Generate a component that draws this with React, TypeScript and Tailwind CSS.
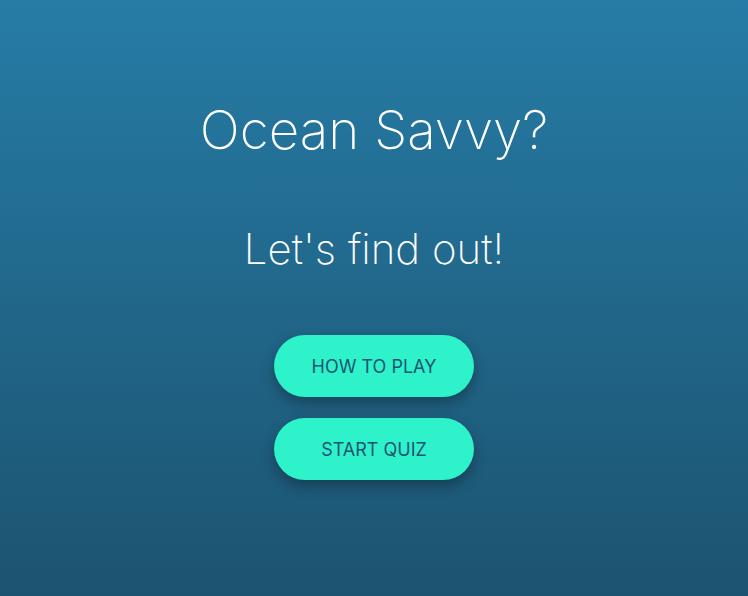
import React from 'react';

export default function App() {
    return (
        <div className="min-h-[596px] w-full bg-gradient-to-b from-[#267ca6] to-[#1c5370] flex flex-col items-center font-['Inter',sans-serif] text-white">
            <h1 className="mt-[98px] text-[53px] leading-[64px] font-extralight">Ocean Savvy?</h1>
            <p className="mt-[61px] text-[42px] leading-[52px] font-extralight">Let's find out!</p>
            <div className="mt-[60px] flex flex-col gap-[21px]">
                <button className="w-[200px] h-[62px] rounded-full bg-[#2ef2c9] text-[#1d5572] text-[18px] font-normal uppercase shadow-[0_6px_14px_rgba(0,0,0,0.3)]">How to play</button>
                <button className="w-[200px] h-[62px] rounded-full bg-[#2ef2c9] text-[#1d5572] text-[18px] font-normal uppercase shadow-[0_6px_14px_rgba(0,0,0,0.3)]">Start quiz</button>
            </div>
        </div>
    );
}
